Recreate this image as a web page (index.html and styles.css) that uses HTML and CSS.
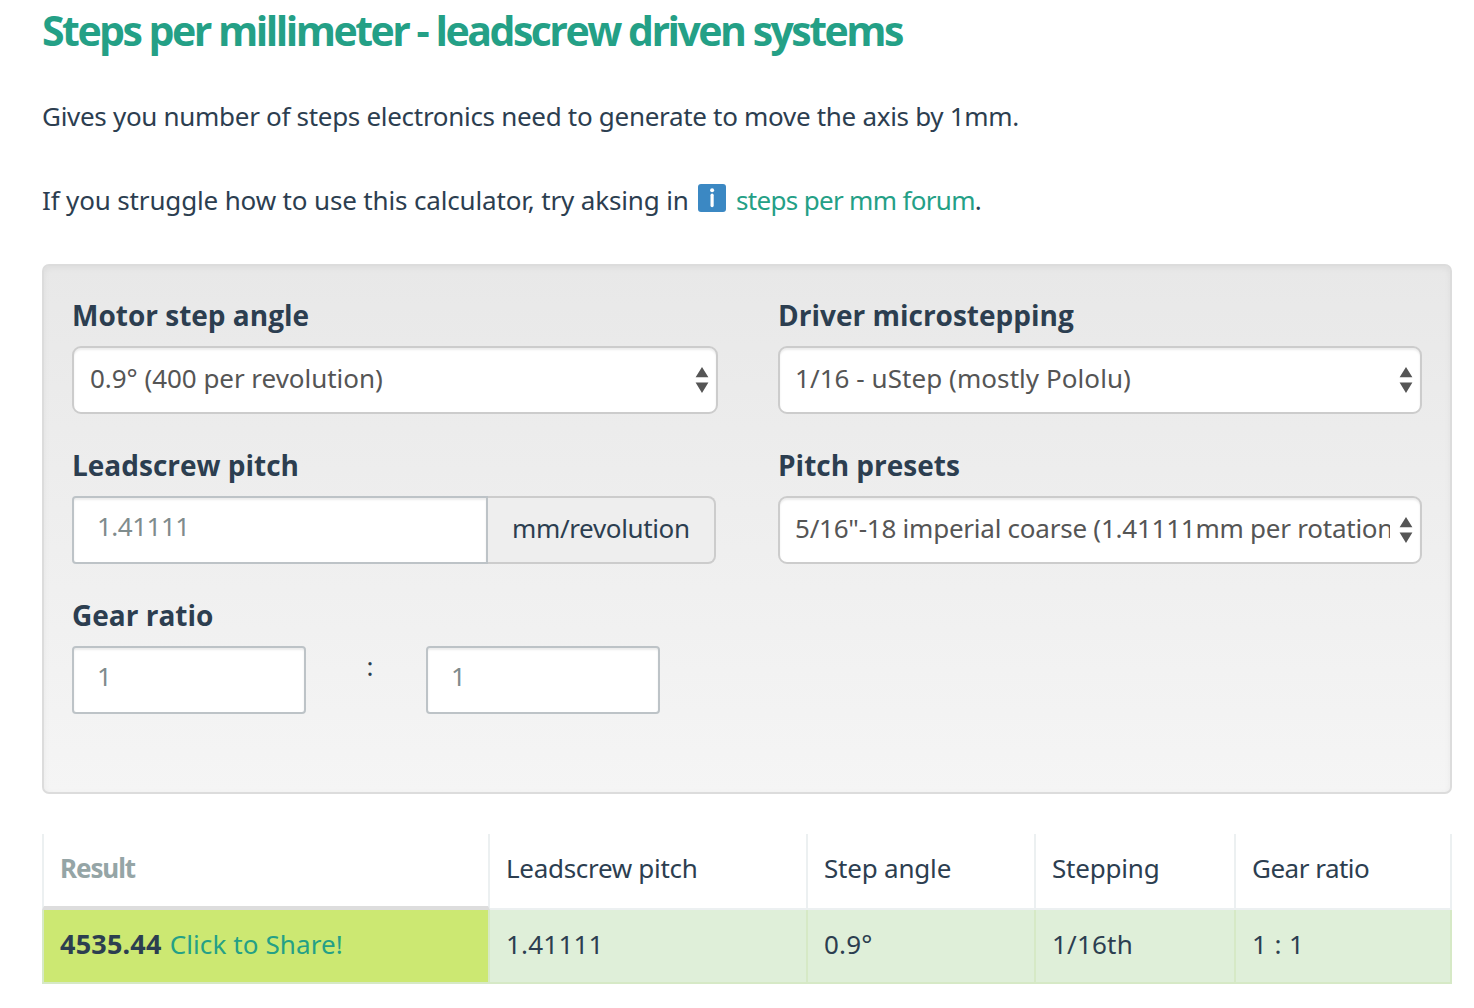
FILE: index.html
```
<!DOCTYPE html>
<html lang="en">
<head>
<meta charset="utf-8">
<title>Steps per millimeter - leadscrew driven systems</title>
<link rel="stylesheet" href="styles.css">
</head>
<body>
<main class="page">
  <h1 class="title">Steps per millimeter - leadscrew driven systems</h1>
  <p class="intro">Gives you number of steps electronics need to generate to move the axis by 1mm.</p>
  <p class="help"><span class="help-text">If you struggle how to use this calculator, try aksing in</span><svg class="info" viewBox="0 0 28 28"><rect width="28" height="28" rx="3" fill="#3b88c3"/><circle cx="14.1" cy="6.3" r="2" fill="#fff"/><rect x="12.5" y="9.6" width="3.2" height="13.6" rx="1.6" fill="#fff"/></svg><a class="link forum" href="#">steps per mm forum</a>.</p>

  <form class="well">
    <div class="field">
      <label class="label" for="angle">Motor step angle</label>
      <div class="select-wrap">
        <select class="select first" id="angle"><option>0.9° (400 per revolution)</option></select>
        <svg class="arrows" viewBox="0 0 14 26"><path d="M7 0L13.4 10.3H.6ZM.6 15.6H13.4L7 26Z"/></svg>
      </div>
    </div>
    <div class="field">
      <label class="label" for="micro">Driver microstepping</label>
      <div class="select-wrap">
        <select class="select micro" id="micro"><option>1/16 - uStep (mostly Pololu)</option></select>
        <svg class="arrows" viewBox="0 0 14 26"><path d="M7 0L13.4 10.3H.6ZM.6 15.6H13.4L7 26Z"/></svg>
      </div>
    </div>
    <div class="field">
      <label class="label" for="pitch">Leadscrew pitch</label>
      <div class="input-group">
        <input class="input pitch" id="pitch" type="text" value="1.41111">
        <span class="addon">mm/revolution</span>
      </div>
    </div>
    <div class="field">
      <label class="label" for="preset">Pitch presets</label>
      <div class="select-wrap">
        <select class="select preset" id="preset"><option>5/16"-18 imperial coarse (1.41111mm per rotation)</option></select>
        <svg class="arrows" viewBox="0 0 14 26"><path d="M7 0L13.4 10.3H.6ZM.6 15.6H13.4L7 26Z"/></svg>
      </div>
    </div>
    <div class="field">
      <label class="label" for="gear-a">Gear ratio</label>
      <div class="ratio">
        <input class="input" id="gear-a" type="text" value="1">
        <span class="colon">:</span>
        <input class="input" type="text" value="1">
      </div>
    </div>
  </form>

  <section class="results">
    <div class="cell head result">Result</div>
    <div class="cell head pitch-head">Leadscrew pitch</div>
    <div class="cell head">Step angle</div>
    <div class="cell head">Stepping</div>
    <div class="cell head gear">Gear ratio</div>
    <div class="cell value total"><strong class="steps">4535.44</strong><a class="link share" href="#">Click to Share!</a></div>
    <div class="cell value number">1.41111</div>
    <div class="cell value angle">0.9°</div>
    <div class="cell value step">1/16th</div>
    <div class="cell value gears">1 : 1</div>
  </section>
</main>
</body>
</html>
```
FILE: styles.css
```
* { box-sizing: border-box; }

body {
  margin: 0;
  background: #fff;
  color: #2c3e50;
  font: 26px/42px "Noto Sans", "Open Sans", sans-serif;
}

.page { padding: 0 22px 0 42px; }

.title {
  margin: 0 0 35px;
  color: #24a086;
  font: bold 41px/60px "Open Sans", sans-serif;
  letter-spacing: -2.5px;
  white-space: nowrap;
}

.intro, .help {
  margin: 0 0 42px;
  height: 42px;
  white-space: nowrap;
}
.intro { letter-spacing: -0.3px; }
.help {
  display: flex;
  margin-bottom: 43px;
}
.help-text { width: 656px; letter-spacing: -0.15px; }
.info { width: 28px; height: 28px; margin: 5px 10px 0 0; }
.link { color: #24a086; text-decoration: none; }
.forum { letter-spacing: -0.68px; }

.well {
  display: grid;
  grid-template-columns: 646px 644px;
  grid-auto-rows: 124px;
  column-gap: 60px;
  row-gap: 26px;
  height: 530px;
  padding: 24px 28px 0;
  border: 2px solid #dcdcdc;
  border-radius: 7px;
  background: linear-gradient(#e8e8e8, #f5f5f5);
  box-shadow: inset 0 2px 6px rgba(0, 0, 0, .05);
}

.label {
  display: block;
  margin-bottom: 6px;
  font: bold 28px/50px "Open Sans", sans-serif;
}

.select-wrap { position: relative; }
.select {
  display: block;
  width: 100%;
  height: 68px;
  padding: 0 30px 4px 15px;
  border: 2px solid #ccc;
  border-radius: 9px;
  background: #fff;
  box-shadow: inset 0 2px 2px rgba(0, 0, 0, .075);
  color: #555;
  font: inherit;
  appearance: none;
}
.first { padding-left: 16px; letter-spacing: -0.04px; }
.micro { letter-spacing: 0.06px; }
.preset { letter-spacing: -0.24px; }
.arrows {
  position: absolute;
  top: 21px;
  right: 9.5px;
  width: 14px;
  height: 26px;
  fill: #555;
}

.input {
  width: 234px;
  height: 68px;
  padding: 0 23px 8px;
  border: 2px solid #bdc3c7;
  border-radius: 4px;
  background: #fff;
  box-shadow: inset 0 2px 2px rgba(0, 0, 0, .075);
  color: #7f8c8d;
  font: inherit;
  letter-spacing: -0.5px;
}
.input-group { display: flex; width: 644px; }
.pitch { width: 416px; border-radius: 4px 0 0 4px; }
.addon {
  flex: 1;
  height: 68px;
  padding-left: 24px;
  border: 2px solid #ccc;
  border-left: 0;
  border-radius: 0 8px 8px 0;
  background: #eee;
  line-height: 60px;
  letter-spacing: -0.35px;
}

.ratio { display: flex; }
.colon {
  width: 120px;
  padding-left: 8px;
  line-height: 40px;
  text-align: center;
}

.results {
  display: grid;
  grid-template-columns: 448px 318px 228px 200px 216px;
  margin-top: 40px;
}
.cell {
  height: 76px;
  padding-left: 16px;
  border-right: 2px solid #ecf0f1;
  border-bottom: 2px solid #ecf0f1;
  line-height: 68px;
  letter-spacing: -0.2px;
  white-space: nowrap;
}
.pitch-head { letter-spacing: -0.3px; }
.result {
  border-left: 2px solid #ecf0f1;
  border-bottom: 4px solid #ddd;
  color: #95a5a6;
  font-weight: bold;
  letter-spacing: -1.1px;
}
.gear { letter-spacing: -0.5px; }
.value {
  height: 74px;
  border-color: #d6e9c6;
  background: #dfefd9;
}
.total {
  border-left: 2px solid #d6e9c6;
  background: #cce872;
}
.number { letter-spacing: 0.2px; }
.angle { letter-spacing: 0.2px; }
.step { letter-spacing: 0.2px; }
.gears { letter-spacing: 0.4px; }
.steps { margin-right: 8px; font-size: 27px; letter-spacing: 0.2px; }
.share { letter-spacing: 0.1px; }
```
